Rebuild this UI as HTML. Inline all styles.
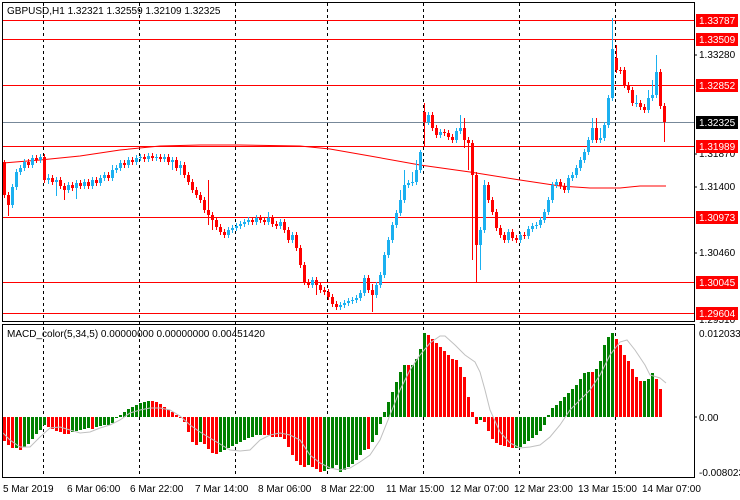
<!DOCTYPE html>
<html><head><meta charset="utf-8"><style>
html,body{margin:0;padding:0;background:#fff;}
svg{display:block;font-family:"Liberation Sans",sans-serif;font-size:10px;}
</style></head><body>
<svg width="740" height="500" xmlns="http://www.w3.org/2000/svg">
<rect x="0" y="0" width="740" height="500" fill="#fff"/>
<g stroke="#000" stroke-dasharray="3,3" stroke-width="1">
<line x1="43.5" y1="3" x2="43.5" y2="478"/><line x1="139.5" y1="3" x2="139.5" y2="478"/>
<line x1="235.5" y1="3" x2="235.5" y2="478"/><line x1="327.5" y1="3" x2="327.5" y2="478"/>
<line x1="423.5" y1="3" x2="423.5" y2="478"/><line x1="519.5" y1="3" x2="519.5" y2="478"/>
<line x1="615.5" y1="3" x2="615.5" y2="478"/>
</g>
<line x1="3" y1="122.5" x2="694" y2="122.5" stroke="#778899"/>
<g stroke="#ff0000" stroke-width="1">
<line x1="3" y1="20.5" x2="694" y2="20.5"/><line x1="3" y1="39.5" x2="694" y2="39.5"/>
<line x1="3" y1="85.5" x2="694" y2="85.5"/><line x1="3" y1="146.5" x2="694" y2="146.5"/>
<line x1="3" y1="217.5" x2="694" y2="217.5"/><line x1="3" y1="282.5" x2="694" y2="282.5"/>
<line x1="3" y1="313.5" x2="694" y2="313.5"/>
</g>
<polyline fill="none" stroke="#ff0000" points="3,163 40,160 80,156 120,150 160,146 200,145 240,145 300,146 330,149 370,156 420,165 470,172 520,180 560,186 590,188 620,188 640,186 666,186"/>

<!-- bull candles -->
<g stroke="#1bb0f0">
<path stroke-width="1" d="M12.5 184V208M16.5 169V190M20.5 165V175M24.5 159V171M32.5 155V168M40.5 154V163M48.5 174V184M56.5 177V196M68.5 182V193M76.5 180V199M84.5 179V189M92.5 177V189M100.5 175V186M104.5 172V181M112.5 165V181M116.5 165V173M120.5 160V171M128.5 157V168M136.5 155V165M140.5 154V161M148.5 153V162M156.5 154V161M164.5 154V162M172.5 157V170M180.5 161V175M228.5 227V238M232.5 225V233M236.5 223V231M240.5 221V229M244.5 219V227M248.5 217V225M256.5 215V225M268.5 212V225M280.5 219V229M292.5 232V243M312.5 277V288M340.5 302V310M344.5 300V308M348.5 298V306M352.5 297V304M356.5 295V303M360.5 290V301M364.5 275V296M376.5 282V298M380.5 272V288M384.5 252V278M388.5 237V258M392.5 222V243M396.5 210V228M400.5 190V216M404.5 170V203M408.5 180V188M412.5 172V186M416.5 160V185M420.5 150V173M428.5 112V125M440.5 129V138M456.5 128V143M460.5 115V134M480.5 227V270M484.5 180V233M508.5 229V243M520.5 232V243M528.5 226V239M532.5 223V232M536.5 222V229M540.5 217V228M544.5 209V223M548.5 197V215M552.5 182V203M556.5 179V188M568.5 175V193M572.5 172V181M576.5 165V178M580.5 157V171M584.5 149V163M588.5 137V155M592.5 118V143M600.5 128V143M604.5 122V141M608.5 95V128M612.5 18V101M636.5 95V107M648.5 90V113M652.5 80V101M656.5 55V98"/>
<path stroke-width="3" d="M12.5 187V205M16.5 172V187M20.5 168V172M24.5 162V168M32.5 158V165M40.5 157V160M48.5 178V180M56.5 180V182M68.5 185V190M76.5 183V188M84.5 182V186M92.5 180V186M100.5 178V183M104.5 175V178M112.5 170V178M116.5 168V170M120.5 163V168M128.5 160V165M136.5 158V162M140.5 157V158M148.5 156V159M156.5 157V158M164.5 157V159M172.5 160V162M180.5 165V168M228.5 230V235M232.5 228V230M236.5 226V228M240.5 224V226M244.5 222V224M248.5 220V222M256.5 218V222M268.5 218V222M280.5 222V226M292.5 235V240M312.5 280V285M340.5 305V307M344.5 303V305M348.5 301V303M352.5 300V301M356.5 298V300M360.5 293V298M364.5 278V293M376.5 285V295M380.5 275V285M384.5 255V275M388.5 240V255M392.5 225V240M396.5 213V225M400.5 200V213M404.5 185V200M408.5 183V185M412.5 182V183M416.5 170V182M420.5 152V170M428.5 115V122M440.5 132V135M456.5 131V140M460.5 128V131M480.5 230V245M484.5 185V230M508.5 232V240M520.5 235V240M528.5 229V236M532.5 226V229M536.5 225V226M540.5 220V225M544.5 212V220M548.5 200V212M552.5 185V200M556.5 182V185M568.5 178V190M572.5 175V178M576.5 168V175M580.5 160V168M584.5 152V160M588.5 140V152M592.5 128V140M600.5 138V140M604.5 125V138M608.5 98V125M612.5 49V98M636.5 103V104M648.5 98V110M652.5 95V98M656.5 72V95"/>
</g>
<!-- bear candles -->
<g stroke="#ff0000">
<path stroke-width="1" d="M4.5 160V198M8.5 192V216M28.5 159V168M36.5 155V163M44.5 154V183M52.5 175V185M60.5 177V189M64.5 183V200M72.5 182V191M80.5 180V189M88.5 179V189M96.5 177V186M108.5 172V181M124.5 160V168M132.5 157V165M144.5 154V162M152.5 153V161M160.5 154V162M168.5 154V165M176.5 157V171M184.5 162V178M188.5 172V185M192.5 179V193M196.5 187V198M200.5 192V203M204.5 197V213M208.5 180V225M212.5 212V230M216.5 217V230M220.5 224V235M224.5 229V238M252.5 217V225M260.5 215V223M264.5 217V225M272.5 215V227M276.5 221V229M284.5 219V233M288.5 227V243M296.5 232V251M300.5 245V268M304.5 262V285M308.5 279V288M316.5 277V295M320.5 282V293M324.5 287V295M328.5 289V300M332.5 294V307M336.5 301V310M368.5 275V293M372.5 284V312M424.5 103V146M432.5 112V131M436.5 125V138M444.5 129V136M448.5 130V140M452.5 134V143M464.5 118V148M468.5 137V170M472.5 140V260M476.5 172V282M488.5 182V203M492.5 197V215M496.5 209V231M500.5 225V238M504.5 232V243M512.5 229V241M516.5 235V243M524.5 232V239M560.5 179V189M564.5 183V193M596.5 118V143M616.5 45V73M620.5 67V74M624.5 67V88M628.5 82V93M632.5 87V106M640.5 100V110M644.5 104V113M660.5 69V109M664.5 103V142"/>
<path stroke-width="3" d="M4.5 162V195M8.5 195V205M28.5 162V165M36.5 158V160M44.5 157V180M52.5 178V182M60.5 180V186M64.5 186V190M72.5 185V188M80.5 183V186M88.5 182V186M96.5 180V183M108.5 175V178M124.5 163V165M132.5 160V162M144.5 157V159M152.5 156V158M160.5 157V159M168.5 157V162M176.5 160V168M184.5 165V175M188.5 175V182M192.5 182V190M196.5 190V195M200.5 195V200M204.5 200V210M208.5 210V215M212.5 215V220M216.5 220V227M220.5 227V232M224.5 232V235M252.5 220V222M260.5 218V220M264.5 220V222M272.5 218V224M276.5 224V226M284.5 222V230M288.5 230V240M296.5 235V248M300.5 248V265M304.5 265V282M308.5 282V285M316.5 280V285M320.5 285V290M324.5 290V292M328.5 292V297M332.5 297V304M336.5 304V307M368.5 278V290M372.5 290V295M424.5 112V122M432.5 115V128M436.5 128V135M444.5 132V133M448.5 133V137M452.5 137V140M464.5 128V140M468.5 140V143M472.5 143V175M476.5 175V245M488.5 185V200M492.5 200V212M496.5 212V228M500.5 228V235M504.5 235V240M512.5 232V238M516.5 238V240M524.5 235V236M560.5 182V186M564.5 186V190M596.5 128V140M616.5 58V70M620.5 70V71M624.5 70V85M628.5 85V90M632.5 90V103M640.5 103V107M644.5 107V110M660.5 72V106M664.5 106V122"/>
</g>

<!-- MACD histogram -->
<path stroke="#008000" stroke-width="3" d="M16.5 417V448M24.5 417V447M28.5 417V444M32.5 417V439M36.5 417V434M40.5 417V430M44.5 417V425M72.5 417V432M76.5 417V431M80.5 417V430M84.5 417V429M88.5 417V428M96.5 417V427M100.5 417V426M104.5 417V425M108.5 417V425M112.5 417V423M116.5 417V418M120.5 417V415M124.5 417V412M128.5 417V409M132.5 417V407M136.5 417V405M140.5 417V403M144.5 417V402M148.5 417V401M200.5 417V442M220.5 417V452M224.5 417V450M228.5 417V448M232.5 417V446M236.5 417V444M240.5 417V442M244.5 417V440M248.5 417V438M252.5 417V437M256.5 417V435M260.5 417V435M308.5 417V465M324.5 417V471M328.5 417V469M332.5 417V468M336.5 417V465M340.5 417V472M344.5 417V470M348.5 417V467M352.5 417V464M356.5 417V460M360.5 417V455M364.5 417V450M372.5 417V442M376.5 417V435M380.5 417V424M384.5 417V412M388.5 417V402M392.5 417V392M396.5 417V382M400.5 417V372M404.5 417V365M412.5 417V365M416.5 417V359M420.5 417V349M424.5 417V333M480.5 417V420M516.5 417V448M520.5 417V447M524.5 417V444M528.5 417V441M532.5 417V438M536.5 417V435M540.5 417V431M544.5 417V425M548.5 417V415M552.5 417V408M556.5 417V405M560.5 417V401M564.5 417V397M568.5 417V393M572.5 417V389M576.5 417V385M580.5 417V379M584.5 417V373M588.5 417V372M596.5 417V369M600.5 417V361M604.5 417V345M608.5 417V337M612.5 417V333M644.5 417V381M648.5 417V379M652.5 417V373"/>
<path stroke="#ff0000" stroke-width="3" d="M4.5 417V441M8.5 417V445M12.5 417V448M20.5 417V450M48.5 417V427M52.5 417V429M56.5 417V431M60.5 417V432M64.5 417V434M68.5 417V434M92.5 417V429M152.5 417V401M156.5 417V402M160.5 417V404M164.5 417V407M168.5 417V410M172.5 417V412M176.5 417V415M180.5 417V418M184.5 417V422M188.5 417V432M192.5 417V442M196.5 417V445M204.5 417V444M208.5 417V449M212.5 417V453M216.5 417V454M264.5 417V435M268.5 417V435M272.5 417V437M276.5 417V437M280.5 417V437M284.5 417V439M288.5 417V447M292.5 417V455M296.5 417V461M300.5 417V465M304.5 417V467M312.5 417V467M316.5 417V469M320.5 417V472M368.5 417V449M408.5 417V365M428.5 417V335M432.5 417V339M436.5 417V343M440.5 417V347M444.5 417V351M448.5 417V355M452.5 417V359M456.5 417V360M460.5 417V367M464.5 417V377M468.5 417V397M472.5 417V412M476.5 417V424M484.5 417V422M488.5 417V431M492.5 417V439M496.5 417V443M500.5 417V445M504.5 417V446M508.5 417V447M512.5 417V448M592.5 417V372M616.5 417V339M620.5 417V345M624.5 417V355M628.5 417V361M632.5 417V369M636.5 417V377M640.5 417V381M656.5 417V379M660.5 417V389"/>
<polyline fill="none" stroke="#c0c0c0" points="3,433 10,440 20,447 30,447 40,437 50,428 60,427 70,430 80,433 90,432 100,428 110,425 120,420 130,413 140,410 150,408 160,408 170,410 180,416 190,425 200,432 210,438 220,444 230,450 240,451 250,450 260,440 270,435 280,433 290,435 300,440 310,455 320,463 330,468 340,470 350,468 360,462 370,455 380,440 390,415 400,390 410,370 420,355 430,343 440,336 445,336 455,345 465,355 475,362 480,372 485,390 490,410 500,432 510,443 520,448 530,447 540,445 550,437 560,425 570,410 580,400 590,390 600,375 610,355 620,342 627,340 635,350 645,365 650,375 660,378 666,383"/>

<text x="7" y="14" fill="#000">GBPUSD,H1  1.32321 1.32559 1.32109 1.32325</text>
<text x="7" y="337" fill="#000">MACD_color(5,34,5) 0.00000000 0.00000000 0.00451420</text>
<rect x="2.5" y="2.5" width="692" height="319" fill="none" stroke="#000"/>
<rect x="2.5" y="324.5" width="692" height="153" fill="none" stroke="#000"/>
<g fill="#000">
<text x="699" y="58">1.33280</text><text x="699" y="157">1.31870</text><text x="699" y="190">1.31400</text>
<text x="699" y="256">1.30460</text><text x="699" y="323">1.29510</text>
<text x="699" y="337">0.0120336</text><text x="699" y="421">0.00</text><text x="699" y="476">-0.008023</text>
</g>
<g stroke="#000"><line x1="694" y1="55" x2="697" y2="55"/><line x1="694" y1="154" x2="697" y2="154"/><line x1="694" y1="187" x2="697" y2="187"/><line x1="694" y1="253" x2="697" y2="253"/><line x1="694" y1="417" x2="697" y2="417"/></g>
<g>
<rect x="696" y="14" width="42" height="13" fill="#ff0000"/><text x="699" y="24" fill="#fff">1.33787</text>
<rect x="696" y="33" width="42" height="13" fill="#ff0000"/><text x="699" y="43" fill="#fff">1.33509</text>
<rect x="696" y="79" width="42" height="13" fill="#ff0000"/><text x="699" y="89" fill="#fff">1.32852</text>
<rect x="696" y="116" width="42" height="13" fill="#000"/><text x="699" y="126" fill="#fff">1.32325</text>
<rect x="696" y="140" width="42" height="13" fill="#ff0000"/><text x="699" y="150" fill="#fff">1.31989</text>
<rect x="696" y="211" width="42" height="13" fill="#ff0000"/><text x="699" y="221" fill="#fff">1.30973</text>
<rect x="696" y="276" width="42" height="13" fill="#ff0000"/><text x="699" y="286" fill="#fff">1.30045</text>
<rect x="696" y="307" width="42" height="13" fill="#ff0000"/><text x="699" y="317" fill="#fff">1.29604</text>
</g>
<g fill="#000">
<text x="3" y="492">5 Mar 2019</text><text x="67" y="492">6 Mar 06:00</text><text x="130" y="492">6 Mar 22:00</text>
<text x="195" y="492">7 Mar 14:00</text><text x="258" y="492">8 Mar 06:00</text><text x="321" y="492">8 Mar 22:00</text>
<text x="386" y="492">11 Mar 15:00</text><text x="450" y="492">12 Mar 07:00</text><text x="514" y="492">12 Mar 23:00</text>
<text x="578" y="492">13 Mar 15:00</text><text x="642" y="492">14 Mar 07:00</text>
</g>
</svg>
</body></html>
